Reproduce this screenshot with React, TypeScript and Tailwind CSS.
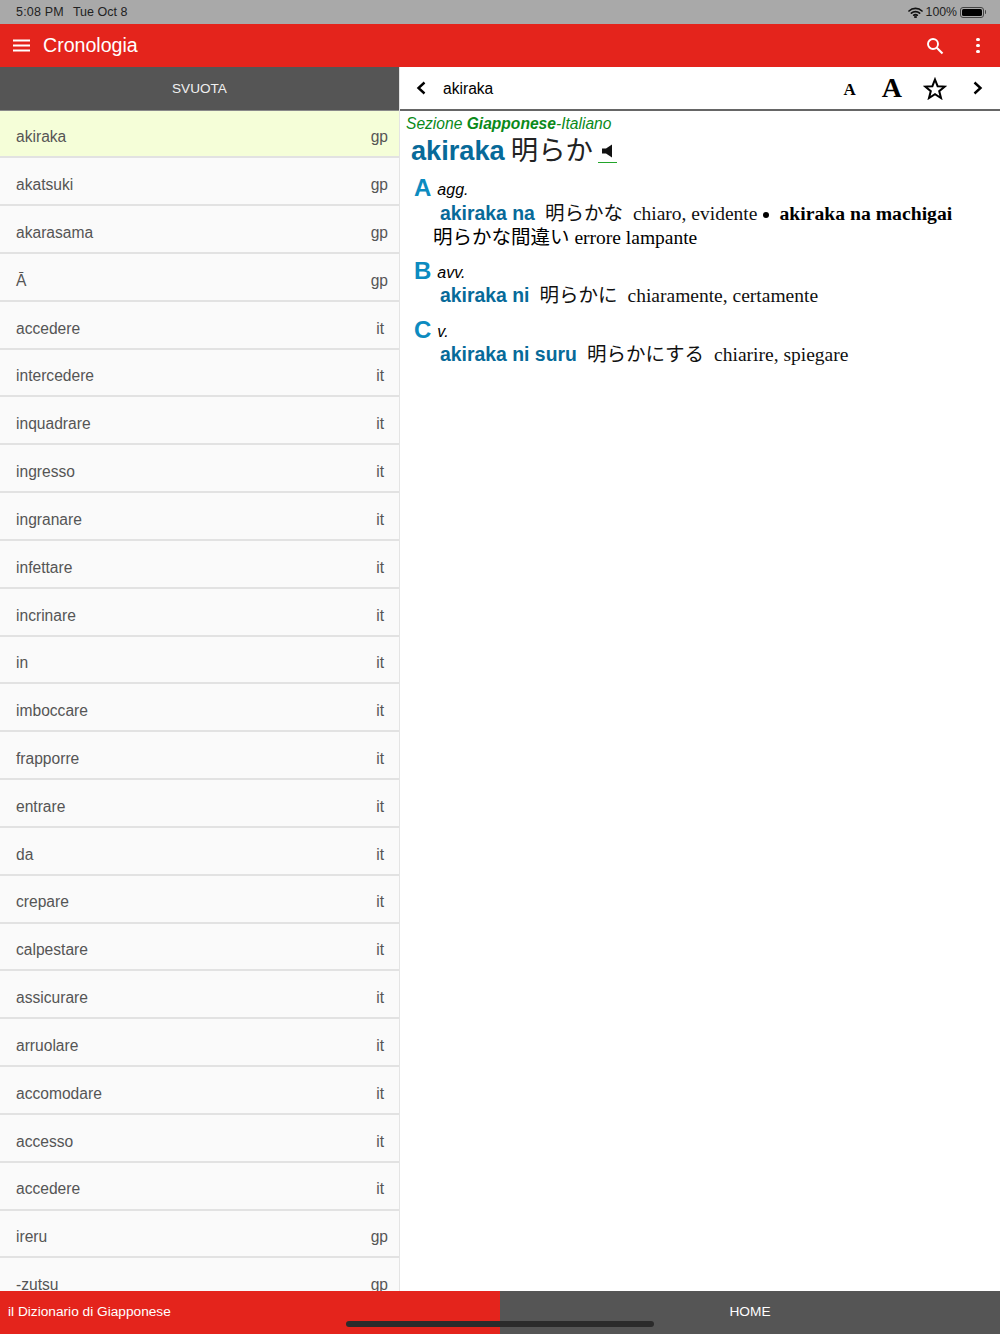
const sans = "font-['Liberation_Sans','Noto_Sans_CJK_JP',sans-serif]"
const serif = "font-['Liberation_Serif','Noto_Sans_CJK_JP',serif]"

const rows: [string, string][] = [
  ['akiraka', 'gp'],
  ['akatsuki', 'gp'],
  ['akarasama', 'gp'],
  ['Ā', 'gp'],
  ['accedere', 'it'],
  ['intercedere', 'it'],
  ['inquadrare', 'it'],
  ['ingresso', 'it'],
  ['ingranare', 'it'],
  ['infettare', 'it'],
  ['incrinare', 'it'],
  ['in', 'it'],
  ['imboccare', 'it'],
  ['frapporre', 'it'],
  ['entrare', 'it'],
  ['da', 'it'],
  ['crepare', 'it'],
  ['calpestare', 'it'],
  ['assicurare', 'it'],
  ['arruolare', 'it'],
  ['accomodare', 'it'],
  ['accesso', 'it'],
  ['accedere', 'it'],
  ['ireru', 'gp'],
  ['-zutsu', 'gp'],
]

function StatusBar() {
  return (
    <div className="flex h-6 shrink-0 items-center justify-between bg-[#a9a9a9] pl-4 pr-3.5 text-[12.5px] text-[#222]">
      <div className="flex gap-[9px]">
        <span className="tracking-[0.2px]">5:08 PM</span>
        <span>Tue Oct 8</span>
      </div>
      <div className="flex items-center gap-[3px]">
        <svg width="15" height="11" viewBox="0 0 15 11" fill="none" stroke="#111" strokeWidth="1.7" strokeLinecap="round">
          <path d="M1 4 C4.5 .6 10.5 .6 14 4" />
          <path d="M3.4 6.2 C5.6 4.2 9.4 4.2 11.6 6.2" />
          <path d="M5.7 8.2 C6.8 7.4 8.2 7.4 9.3 8.2" />
          <circle cx="7.5" cy="9.9" r=".5" fill="#111" />
        </svg>
        <span className="text-[12.3px]">100%</span>
        <div className="flex items-center">
          <div className="h-[11px] w-[24px] rounded-[3px] border border-[#444] p-px">
            <div className="h-full w-full rounded-[1.5px] bg-black" />
          </div>
          <div className="ml-px h-1 w-px rounded-r bg-[#444]" />
        </div>
      </div>
    </div>
  )
}

function Header() {
  return (
    <div className="flex h-[43px] shrink-0 items-center bg-[#e4241c] pl-[13px] pr-[20px] text-white">
      <svg width="17" height="13" viewBox="0 0 17 13" fill="none" stroke="#fff" strokeWidth="1.9">
        <path d="M0 1.5H17M0 6.5H17M0 11.5H17" />
      </svg>
      <h1 className="ml-[13px] flex-1 text-[19.6px] font-normal">Cronologia</h1>
      <svg width="18" height="18" viewBox="0 0 18 18" fill="none" stroke="#fff" className="mr-[32px]">
        <circle cx="7" cy="7" r="5" strokeWidth="1.9" />
        <path d="M10.8 10.8L16.5 16.5" strokeWidth="2.1" />
      </svg>
      <div className="flex flex-col gap-[2.6px]">
        <div className="size-[3.6px] rounded-full bg-white" />
        <div className="size-[3.6px] rounded-full bg-white" />
        <div className="size-[3.6px] rounded-full bg-white" />
      </div>
    </div>
  )
}

function HistoryList() {
  return (
    <div className="flex w-[400px] shrink-0 flex-col overflow-hidden border-r border-r-[#e4e4e4] bg-[#fafafa]">
      <div className="flex h-[43.5px] shrink-0 items-center justify-center border-b border-b-[#8a8a8a] bg-[#555] pt-[2px] text-[13.6px] text-[#f0f0f0]">
        SVUOTA
      </div>
      {rows.map(([word, lang], i) => (
        <div
          key={i}
          className={`flex h-[47.83px] shrink-0 items-center justify-between border-b-2 border-b-[#e2e2e2] pl-4 pt-[7px] text-[15.6px] text-[#555] ${
            i === 0 ? 'bg-[#f5fed8]' : ''
          } ${lang === 'gp' ? 'pr-[11px]' : 'pr-[15px]'}`}
        >
          <span>{word}</span>
          <span>{lang}</span>
        </div>
      ))}
    </div>
  )
}

function Entry() {
  return (
    <div className="min-w-0 flex-1 bg-white">
      <div className="flex h-[44px] items-center border-b-2 border-b-[#666] pl-[16px] text-black">
        <svg width="11" height="14" viewBox="0 0 11 14" fill="none" stroke="#000" strokeWidth="2.4">
          <path d="M8.5 1.5L2.5 7L8.5 12.5" />
        </svg>
        <span className="ml-[16px] mt-[1px] flex-1 text-[15.6px]">akiraka</span>
        <span className={`${serif} mr-[26px] mt-1 text-[17px] font-bold`}>A</span>
        <span className={`${serif} mr-[21px] text-[28px] font-bold leading-none`}>A</span>
        <svg width="24" height="23" viewBox="0 0 24 23" fill="none" stroke="#000" strokeWidth="2" className="mr-[25px]">
          <path d="M12 2.5L14.6 9.2L21.8 9.6L16.2 14.1L18 21L12 17.1L6 21L7.8 14.1L2.2 9.6L9.4 9.2Z" />
        </svg>
        <svg width="11" height="14" viewBox="0 0 11 14" fill="none" stroke="#000" strokeWidth="2.4" className="mr-[17px]">
          <path d="M2.5 1.5L8.5 7L2.5 12.5" />
        </svg>
      </div>

      <div className="pl-[6px] pt-[4px]">
        <p className="text-[15.6px] italic leading-[18px] text-[#0a8a1a]">
          Sezione <b>Giapponese</b>-Italiano
        </p>
        <div className={`${sans} ml-[5px] mt-px flex h-[34px] items-center text-[27.4px] leading-none text-[#222]`}>
          <b className="text-[27.2px] text-[#076a99]">akiraka</b>
          <span className="ml-[6px]">明らか</span>
          <span className="ml-[5px] flex h-[24px] w-[19px] items-center justify-center border-b border-b-[#22a52a]">
            <svg width="13" height="14" viewBox="0 0 13 14" fill="#111">
              <path d="M1 4.5H5L11 0.5V13.5L5 9.5H1Z" />
            </svg>
          </span>
        </div>

        <Sense letter="A" pos="agg." className="mt-[6px]">
          <div className="h-[26px] pl-[28px]">
            <Phrase term="akiraka na" jp="明らかな" gloss="chiaro, evidente" />
            <span className="mx-[6px] inline-block size-[6px] rounded-full bg-black align-[2px]" />
            <b className={`${serif} ml-[4px] text-[19.7px]`}>akiraka na machigai</b>
          </div>
          <div className="h-6 pl-[21px] text-[19.5px] leading-6">
            <span>明らかな間違い</span>
            <span className={serif}> errore lampante</span>
          </div>
        </Sense>

        <Sense letter="B" pos="avv." className="mt-[8px]">
          <div className="h-[25px] pl-[28px] pt-px">
            <Phrase term="akiraka ni" jp="明らかに" gloss="chiaramente, certamente" />
          </div>
        </Sense>

        <Sense letter="C" pos="v." className="mt-[9px]">
          <div className="h-[25px] pl-[28px] pt-px">
            <Phrase term="akiraka ni suru" jp="明らかにする" gloss="chiarire, spiegare" />
          </div>
        </Sense>
      </div>
    </div>
  )
}

function Sense({ letter, pos, className, children }: { letter: string; pos: string; className: string; children: React.ReactNode }) {
  return (
    <div className={`${className} pl-[6px]`}>
      <div className="flex h-[25px] items-center text-black">
        <b className="mt-[2px] pl-[2px] text-[24px] leading-none text-[#0c8bc0]">{letter}</b>
        <i className="ml-[6px] mt-[6px] text-[16px]">{pos}</i>
      </div>
      {children}
    </div>
  )
}

function Phrase({ term, jp, gloss }: { term: string; jp: string; gloss: string }) {
  return (
    <span className="text-[19.5px] leading-6 text-[#111]">
      <b className={`${sans} text-[19.4px] text-[#076a99]`}>{term}</b>
      <span className="ml-[10px]">{jp}</span>
      <span className={`${serif} ml-[10px]`}>{gloss}</span>
    </span>
  )
}

export default function App() {
  return (
    <div className={`${sans} relative flex h-[1334px] w-[1000px] flex-col overflow-hidden bg-white`}>
      <StatusBar />
      <Header />
      <div className="flex min-h-0 flex-1">
        <HistoryList />
        <Entry />
      </div>
      <div className="flex h-[43px] shrink-0 text-[13.7px] text-white">
        <div className="flex w-[500px] items-center bg-[#e4241c] pl-2">il Dizionario di Giapponese</div>
        <div className="flex w-[500px] items-center justify-center bg-[#555]">HOME</div>
      </div>
      {/* home indicator */}
      <div className="absolute bottom-[7px] left-[346px] h-[6px] w-[308px] rounded-full bg-[#2b2b2b]" />
    </div>
  )
}
